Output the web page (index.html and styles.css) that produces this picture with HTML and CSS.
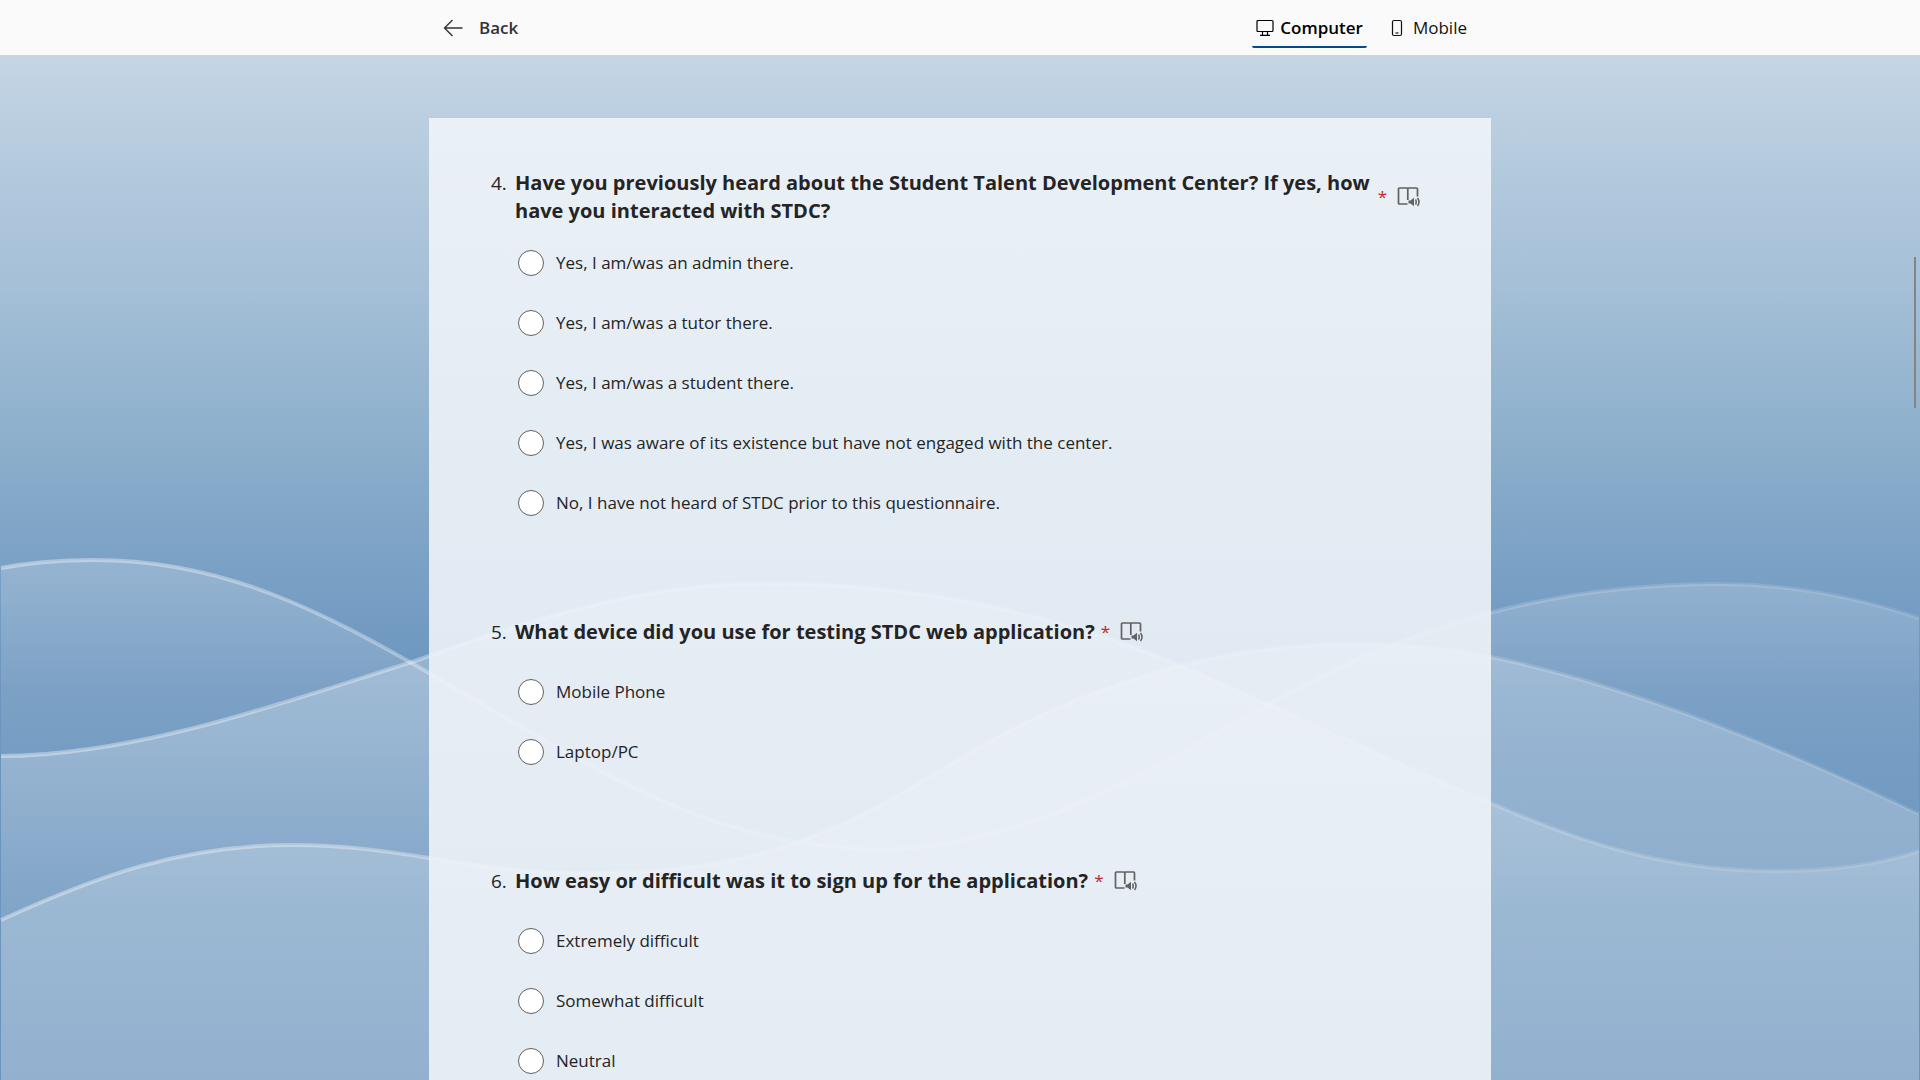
FILE: index.html
```html
<!DOCTYPE html>
<html lang="en">
<head>
<meta charset="utf-8">
<meta name="viewport" content="width=device-width, initial-scale=1">
<title>Form preview</title>
<link rel="stylesheet" href="styles.css">
</head>
<body>
<svg class="defs" aria-hidden="true">
  <symbol id="reader" viewBox="0 0 24 22">
    <path d="M10.500 18H2.500Q1.500 18 1.500 17V3Q1.500 2 2.500 2H9.500Q10.800 2 10.800 3V14M10.800 3Q10.800 2 12 2H19.500Q20.500 2 20.500 3V10.500" fill="none" stroke="currentColor" stroke-width="1.700"/>
    <path d="M11.500 14.500H13.500L17 11.800V20.200L13.500 17.500H11.500Z" fill="currentColor"/>
    <path d="M18.500 13.500Q20 16 18.500 18.500M20.500 12Q23.600 16 20.500 20" fill="none" stroke="currentColor" stroke-width="1.500"/>
  </symbol>
</svg>

<header class="topbar">
  <div class="topbar-inner">
    <button class="back" type="button">
      <svg width="20" height="18" viewBox="0 0 20 18" aria-hidden="true"><path d="M9.500 1L1.500 9L9.500 17M1.500 9H19.500" fill="none" stroke="currentColor" stroke-width="1.400"/></svg>
      Back
    </button>
    <nav class="views" aria-label="Preview size">
      <button class="view active" type="button">
        <svg width="18" height="18" viewBox="0 0 18 18" aria-hidden="true"><path d="M2 1.500H16Q17 1.500 17 2.500V11.500Q17 12.500 16 12.500H2Q1 12.500 1 11.500V2.500Q1 1.500 2 1.500ZM6.500 12.500V16M11.500 12.500V16M4 16.300H14" fill="none" stroke="currentColor" stroke-width="1.200"/></svg>
        Computer
      </button>
      <button class="view" type="button">
        <svg width="16" height="18" viewBox="0 0 16 18" aria-hidden="true"><rect x="1.500" y="1.500" width="9" height="15" rx="1.500" fill="none" stroke="currentColor" stroke-width="1.200"/><path d="M4.500 14H7.500" stroke="currentColor" stroke-width="1.200"/></svg>
        Mobile
      </button>
    </nav>
  </div>
</header>

<div class="stage">
  <svg class="waves" viewBox="0 0 1920 1025" preserveAspectRatio="none" aria-hidden="true">
    <defs>
      <linearGradient id="fillA" gradientUnits="userSpaceOnUse" x1="0" y1="505" x2="0" y2="865">
        <stop offset="0" stop-color="#fff" stop-opacity=".2"/><stop offset=".55" stop-color="#fff" stop-opacity=".07"/><stop offset="1" stop-color="#fff" stop-opacity=".02"/>
      </linearGradient>
      <linearGradient id="fillB" gradientUnits="userSpaceOnUse" x1="0" y1="525" x2="0" y2="1025">
        <stop offset="0" stop-color="#fff" stop-opacity=".28"/><stop offset=".35" stop-color="#fff" stop-opacity=".24"/><stop offset=".65" stop-color="#fff" stop-opacity=".13"/><stop offset="1" stop-color="#fff" stop-opacity=".09"/>
      </linearGradient>
      <linearGradient id="fillC" gradientUnits="userSpaceOnUse" x1="0" y1="590" x2="0" y2="1025">
        <stop offset="0" stop-color="#fff" stop-opacity=".24"/><stop offset=".5" stop-color="#fff" stop-opacity=".22"/><stop offset="1" stop-color="#fff" stop-opacity=".18"/>
      </linearGradient>
      <linearGradient id="line" gradientUnits="userSpaceOnUse" x1="0" y1="0" x2="1920" y2="0">
        <stop offset="0" stop-color="#fff" stop-opacity=".38"/><stop offset=".6" stop-color="#fff" stop-opacity=".22"/><stop offset="1" stop-color="#fff" stop-opacity=".1"/>
      </linearGradient>
      <path id="waveA" d="M1 513C32 507 63 505 95 505C225 505 325 558 429 618C590 711 710 794 880 794C1025 794 1160 710 1276 645C1415 567 1560 529 1719 529C1790 529 1860 543 1919 563"/>
      <path id="waveB" d="M1 701C140 701 300 642 415 606C520 568 640 528 764 528C920 528 1060 560 1174 608C1290 657 1390 706 1491 748C1590 792 1675 816 1774 816C1825 816 1875 811 1919 796"/>
      <path id="waveC" d="M1 865C95 822 180 790 293 790C345 790 385 796 429 803C485 812 530 819 587 818C670 818 730 810 798 787C890 755 960 697 1037 662C1130 619 1235 589 1353 589C1400 589 1445 592 1491 602C1640 633 1790 697 1919 759"/>
    </defs>
    <path fill="url(#fillA)" d="M1 513C32 507 63 505 95 505C225 505 325 558 429 618C590 711 710 794 880 794C1025 794 1160 710 1276 645C1415 567 1560 529 1719 529C1790 529 1860 543 1919 563V1025H1Z"/>
    <path fill="url(#fillB)" d="M1 701C140 701 300 642 415 606C520 568 640 528 764 528C920 528 1060 560 1174 608C1290 657 1390 706 1491 748C1590 792 1675 816 1774 816C1825 816 1875 811 1919 796V1025H1Z"/>
    <path fill="url(#fillC)" d="M1 865C95 822 180 790 293 790C345 790 385 796 429 803C485 812 530 819 587 818C670 818 730 810 798 787C890 755 960 697 1037 662C1130 619 1235 589 1353 589C1400 589 1445 592 1491 602C1640 633 1790 697 1919 759V1025H1Z"/>
    <g fill="none" stroke="url(#line)" stroke-width="4"><use href="#waveA"/><use href="#waveB"/><use href="#waveC"/></g>
  </svg>

  <main class="scroller">
    <form class="card">
      <fieldset class="question" aria-labelledby="q4">
        <div class="question-head">
          <div class="prompt"><span class="number">4.</span><h2 id="q4">Have you previously heard about the Student Talent Development Center? If yes, how have you interacted with STDC?</h2></div>
          <span class="required">*</span>
          <button class="reader" type="button" aria-label="Immersive Reader"><svg width="24" height="22"><use href="#reader"/></svg></button>
        </div>
        <label class="option"><input type="radio" name="q4">Yes, I am/was an admin there.</label>
        <label class="option"><input type="radio" name="q4">Yes, I am/was a tutor there.</label>
        <label class="option"><input type="radio" name="q4">Yes, I am/was a student there.</label>
        <label class="option"><input type="radio" name="q4">Yes, I was aware of its existence but have not engaged with the center.</label>
        <label class="option"><input type="radio" name="q4">No, I have not heard of STDC prior to this questionnaire.</label>
      </fieldset>
      <fieldset class="question" aria-labelledby="q5">
        <div class="question-head">
          <div class="prompt"><span class="number">5.</span><h2 id="q5">What device did you use for testing STDC web application?</h2></div>
          <span class="required">*</span>
          <button class="reader" type="button" aria-label="Immersive Reader"><svg width="24" height="22"><use href="#reader"/></svg></button>
        </div>
        <label class="option"><input type="radio" name="q5">Mobile Phone</label>
        <label class="option"><input type="radio" name="q5">Laptop/PC</label>
      </fieldset>
      <fieldset class="question" aria-labelledby="q6">
        <div class="question-head">
          <div class="prompt"><span class="number">6.</span><h2 id="q6">How easy or difficult was it to sign up for the application?</h2></div>
          <span class="required">*</span>
          <button class="reader" type="button" aria-label="Immersive Reader"><svg width="24" height="22"><use href="#reader"/></svg></button>
        </div>
        <label class="option"><input type="radio" name="q6">Extremely difficult</label>
        <label class="option"><input type="radio" name="q6">Somewhat difficult</label>
        <label class="option"><input type="radio" name="q6">Neutral</label>
      </fieldset>
    </form>
  </main>
  <div class="scroll-thumb" aria-hidden="true"></div>
</div>
</body>
</html>
```
FILE: styles.css
```css
* { box-sizing: border-box; }

body {
  margin: 0;
  height: 100vh;
  display: flex;
  flex-direction: column;
  overflow: hidden;
  font-family: "Segoe UI", "Open Sans", "Noto Sans", sans-serif;
  font-size: 17px;
  line-height: 28px;
  color: #242424;
}

button {
  font: inherit;
  color: inherit;
  background: none;
  border: 0;
  padding: 0;
  cursor: pointer;
}

svg { display: block; }
.defs { position: absolute; width: 0; height: 0; }

.topbar { flex: none; background: #fafafa; }

.topbar-inner {
  max-width: 1062px;
  height: 55px;
  margin: 0 auto;
  padding: 0 20px 0 14px;
  display: flex;
  align-items: center;
  justify-content: space-between;
}

.back {
  display: flex;
  align-items: center;
  gap: 16px;
  font-weight: 600;
  color: #333;
}

.views { display: flex; align-items: flex-end; height: 100%; gap: 20px; }

.view {
  display: flex;
  align-items: center;
  gap: 6px;
  height: 38px;
  margin-bottom: 7px;
  padding: 0 4px;
  border-bottom: 2px solid transparent;
  border-radius: 2px;
  color: #111;
}

.view.active { font-weight: 600; color: #000; border-color: #004c8c; }

.stage {
  position: relative;
  flex: 1;
  min-height: 0;
  background: linear-gradient(#c5d5e4 0, #b5cbde 10%, #a4bfd7 23%, #8eb0cc 37%, #82a7c8 44%, #739bc2 56%, #6b95be 62%);
}

.waves { position: absolute; inset: 0; width: 100%; height: 100%; }

.scroller {
  position: relative;
  height: 100%;
  padding: 63px 0;
  overflow-y: auto;
  scrollbar-width: none;
}

.card {
  max-width: 1062px;
  margin: 0 auto;
  padding: 51px 70px 77px 62px;
  display: flex;
  flex-direction: column;
  gap: 77px;
  background: rgba(239, 244, 248, .89);
}

.question { margin: 0; padding: 0; border: 0; min-width: 0; }

.question-head {
  display: flex;
  align-items: center;
  min-height: 44px;
  margin-bottom: 8px;
}

.prompt { display: flex; align-items: flex-start; }
.number { flex: none; width: 24px; font-size: 19px; }

h2 {
  margin: 0;
  font-size: 20px;
  font-weight: 700;
  line-height: 28px;
}

.required { margin-left: 6px; color: #c4262e; }
.reader { margin-left: 10px; color: #616161; }

.option {
  display: flex;
  align-items: center;
  gap: 12px;
  height: 60px;
  padding-left: 27px;
}

.option input {
  appearance: none;
  flex: none;
  width: 26px;
  height: 26px;
  margin: 0;
  border: 1px solid #616161;
  border-radius: 50%;
  background: #fff;
}

.option input:checked { border: 8px solid #004c8c; }

.scroll-thumb {
  position: absolute;
  right: 4px;
  top: 202px;
  width: 2px;
  height: 151px;
  background: #848484;
}
```
